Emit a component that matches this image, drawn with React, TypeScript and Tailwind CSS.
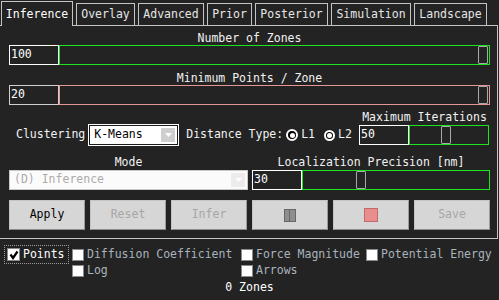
import { FC } from 'react'

const font = { fontFamily: '"DejaVu Sans Mono", "Liberation Mono", monospace' }

const tabs = [
    { label: 'Overlay', w: 'w-[59px]' },
    { label: 'Advanced', w: 'w-[66px]' },
    { label: 'Prior', w: 'w-[45px]' },
    { label: 'Posterior', w: 'w-[73px]' },
    { label: 'Simulation', w: 'w-[80px]' },
    { label: 'Landscape', w: 'w-[73px]' },
]

interface SliderProps {
    value: string
    width: string
    inputBorder: string
    trackBorder: string
    handle: string
}

const Slider: FC<SliderProps> = ({ value, width, inputBorder, trackBorder, handle }) => (
    <div className="flex h-[20px]">
        <div className={`flex h-full w-[50px] items-center border px-[1px] text-white ${inputBorder}`}>
            {value}
        </div>
        <div className={`relative h-full border ${width} ${trackBorder}`}>
            <div
                className={`absolute top-0 h-[18px] w-[10px] rounded-[1px] border border-[#a8a8a8] bg-[#242424] ${handle}`}
            />
        </div>
    </div>
)

const Radio: FC<{ label: string; size: string }> = ({ label, size }) => (
    <div className="flex items-center gap-[3px]">
        <div className={`flex items-center justify-center rounded-full border-2 border-white bg-black ${size}`}>
            <div className="h-[5px] w-[5px] rounded-full bg-white" />
        </div>
        <span>{label}</span>
    </div>
)

const Btn: FC<{ children: React.ReactNode; disabled?: boolean }> = ({ children, disabled }) => (
    <div
        className={`flex h-[30px] w-[76px] items-center justify-center border border-[#c4c4c4] border-b-[#8c8c8c] border-r-[#9c9c9c] bg-[#d6d6d6] ${
            disabled ? 'text-[#a6a6a6]' : 'text-black'
        }`}
    >
        {children}
    </div>
)

const Check: FC<{ label: string; checked?: boolean }> = ({ label, checked }) => (
    <div className="flex h-[13px] items-center gap-[3px]">
        <div
            className={`flex items-center justify-center border border-[#8a8a8a] bg-white ${
                checked ? 'h-[13px] w-[13px]' : 'h-[12px] w-[12px]'
            }`}
        >
            {checked && (
                <svg width="10" height="10" viewBox="0 0 10 10">
                    <path d="M1.5 4.5 L4 8 L8.5 1.5" stroke="black" strokeWidth="2.2" fill="none" />
                </svg>
            )}
        </div>
        <span className={checked ? 'text-white' : 'text-[#a9b3bc]'}>{label}</span>
    </div>
)

const App: FC = () => {
    return (
        <div className="h-[300px] w-[499px] overflow-hidden bg-[#232323] text-[11.5px] leading-none text-[#f2f2f2]" style={font}>
            {/* tabs */}
            <div className="flex h-[25px] items-end gap-[3px] pl-[1px]">
                <div className="relative z-10 -mb-[1px] flex h-[25px] w-[72px] items-center justify-center border border-b-0 border-[#c4c4c4] bg-[#232323] pt-[1px] text-white">
                    Inference
                </div>
                {tabs.map((t) => (
                    <div
                        key={t.label}
                        className={`flex h-[22px] items-center justify-center border border-b-0 border-[#c4c4c4] pt-[1px] text-[#e6e6e6] ${t.w}`}
                    >
                        {t.label}
                    </div>
                ))}
            </div>

            <div className="h-[214px] w-[498px] border border-l-0 border-[#c4c4c4] pl-[9px]">
                <div className="w-[481px]">
                    <div className="flex h-[19px] items-end justify-center pb-[1px]">Number of Zones</div>
                    <Slider
                        value="100"
                        width="w-[431px]"
                        inputBorder="border-white"
                        trackBorder="border-[#1de51d]"
                        handle="right-[1px]"
                    />
                    <div className="flex h-[20px] items-end justify-center pb-[1px]">Minimum Points / Zone</div>
                    <Slider
                        value="20"
                        width="w-[431px]"
                        inputBorder="border-[#d0d0d0]"
                        trackBorder="border-[#e59595]"
                        handle="right-[1px]"
                    />

                    <div className="mt-[7px] flex">
                        <div className="flex flex-1 items-end pl-[7px]">
                            <div className="flex h-[20px] items-center">Clustering</div>
                            <div className="ml-[4px] flex h-[20px] w-[89px] items-center border border-[#1a1a1a] bg-white pl-[4px] text-black outline outline-1 outline-white">
                                <span className="flex-1">K-Means</span>
                                <div className="mr-[2px] flex h-[14px] w-[14px] items-center justify-center bg-[#cfcfcf]">
                                    <svg width="7" height="4" viewBox="0 0 7 4">
                                        <path d="M0 0 H7 L3.5 4 Z" fill="white" />
                                    </svg>
                                </div>
                            </div>
                            <div className="ml-[8px] flex h-[20px] items-center">
                                <span>Distance Type:</span>
                                <div className="ml-[3px]">
                                    <Radio label="L1" size="h-[12px] w-[12px]" />
                                </div>
                                <div className="ml-[9px]">
                                    <Radio label="L2" size="h-[11px] w-[11px]" />
                                </div>
                            </div>
                        </div>
                        <div className="flex w-[131px] flex-col">
                            <div className="flex h-[13px] items-start justify-center">Maximum Iterations</div>
                            <Slider
                                value="50"
                                width="w-[80px]"
                                inputBorder="border-white"
                                trackBorder="border-[#1de51d]"
                                handle="left-[31px]"
                            />
                        </div>
                    </div>

                    <div className="mt-[11px] flex gap-[4px]">
                        <div className="flex w-[239px] flex-col">
                            <div className="flex h-[14px] items-end justify-center pb-[2px]">Mode</div>
                            <div className="flex h-[20px] items-center border border-[#c8c8c8] bg-[#fbfbfb] pl-[4px] text-[#ababab]">
                                <span className="flex-1">(D) Inference</span>
                                <div className="mr-[2px] flex h-[14px] w-[14px] items-center justify-center bg-[#ececec]">
                                    <svg width="7" height="4" viewBox="0 0 7 4">
                                        <path d="M0 0 H7 L3.5 4 Z" fill="white" />
                                    </svg>
                                </div>
                            </div>
                        </div>
                        <div className="flex w-[238px] flex-col">
                            <div className="flex h-[14px] items-end justify-center pb-[2px]">Localization Precision [nm]</div>
                            <Slider
                                value="30"
                                width="w-[188px]"
                                inputBorder="border-white"
                                trackBorder="border-[#1de51d]"
                                handle="left-[53px]"
                            />
                        </div>
                    </div>

                    <div className="mt-[10px] flex gap-[5px]">
                        <Btn>Apply</Btn>
                        <Btn disabled>Reset</Btn>
                        <Btn disabled>Infer</Btn>
                        <Btn disabled>
                            <div className="flex">
                                <div className="h-[13px] w-[6px] border border-[#666] bg-[#8e8e8e]" />
                                <div className="h-[13px] w-[6px] border border-l-0 border-[#666] bg-[#8e8e8e]" />
                            </div>
                        </Btn>
                        <Btn disabled>
                            <div className="h-[14px] w-[14px] border border-[#c06a6a] bg-[#ea8d8d]" />
                        </Btn>
                        <Btn disabled>Save</Btn>
                    </div>
                </div>
            </div>

            {/* display options */}
            <div className="mt-[6px] flex pl-[4px]">
                <div className="flex h-[19px] w-[65px] items-center border border-dotted border-[#9a9a9a] pl-[2px]">
                    <Check label="Points" checked />
                </div>
                <div className="ml-[3px] flex w-[169px] flex-col gap-[3px] pt-[3px]">
                    <Check label="Diffusion Coefficient" />
                    <Check label="Log" />
                </div>
                <div className="flex w-[125px] flex-col gap-[3px] pt-[3px]">
                    <Check label="Force Magnitude" />
                    <Check label="Arrows" />
                </div>
                <div className="flex flex-col pt-[3px]">
                    <Check label="Potential Energy" />
                </div>
            </div>
            <div className="mt-[5px] flex justify-center text-white">0 Zones</div>
        </div>
    )
}

export default App
